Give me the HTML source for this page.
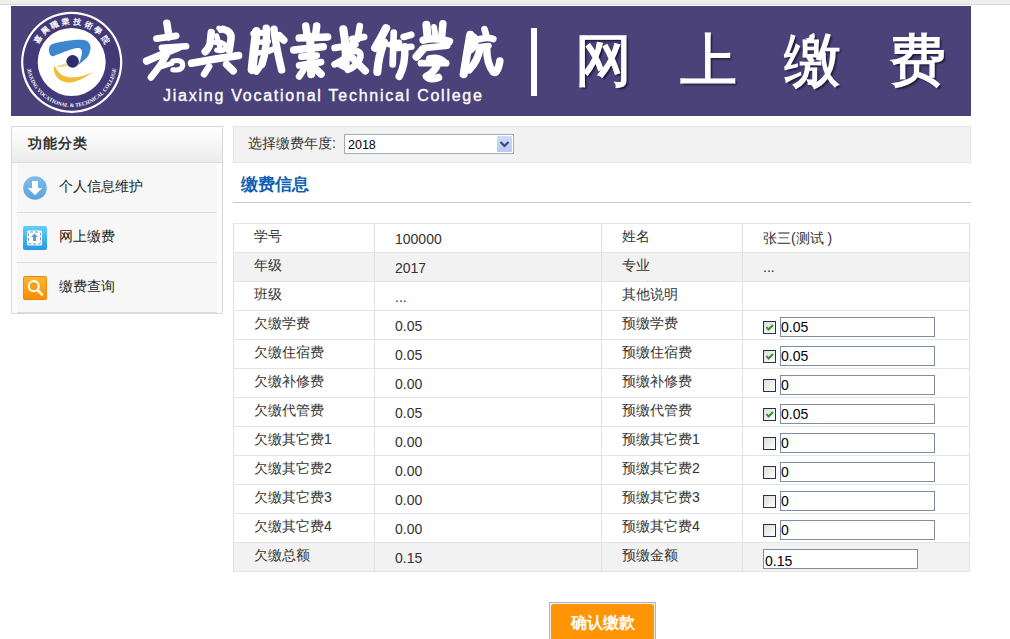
<!DOCTYPE html>
<html><head><meta charset="utf-8">
<style>
*{box-sizing:border-box}
html,body{margin:0;padding:0;background:#fff;width:1010px;height:639px;overflow:hidden;font-family:"Liberation Sans",sans-serif;color:#333}
#topbar{position:absolute;left:0;top:0;width:1010px;height:5px;background:#eeeeea;border-bottom:1px solid #d9d7e0}
#banner{position:absolute;left:11px;top:6px;width:960px;height:110px;background:#4b427a;overflow:hidden}
#cal{position:absolute;left:132px;top:5px;font-size:46px;line-height:60px;font-weight:normal;color:#fff;letter-spacing:-1px;white-space:nowrap;-webkit-text-stroke:1.2px #fff;transform:scaleY(1.25);transform-origin:0 0}
#eng{position:absolute;left:152px;top:80px;font-size:16px;line-height:20px;color:#fff;letter-spacing:1.75px;white-space:nowrap;-webkit-text-stroke:0.35px #fff}
#vbar{position:absolute;left:520px;top:22px;width:6px;height:68px;background:#fff}
#wsjf{position:absolute;left:564px;top:20px;font-size:57px;line-height:68px;color:#fff;letter-spacing:47.7px;white-space:nowrap;-webkit-text-stroke:1.3px #fff;text-shadow:2px 2px 2px #1e1838}
#side{position:absolute;left:11px;top:126px;width:212px;height:188px;border:1px solid #d9d9d9;background:#fcfcfc}
#side .hd{height:36px;background:linear-gradient(#ffffff,#ececec);border-bottom:1px solid #dadada;font-weight:bold;font-size:14px;color:#333;padding-left:16px;line-height:32px;letter-spacing:1px}
#side .it{position:absolute;left:5px;width:200px;height:50px;border-bottom:1px solid #dcdcdc;background:#f7f7f7}
#side .it span{position:absolute;left:42px;top:15px;font-size:14px;color:#222;line-height:16px}
#side .ic{position:absolute;left:6px;top:13px;width:24px;height:24px}
#selbar{position:absolute;left:233px;top:126px;width:738px;height:37px;background:#f2f2f2;border:1px solid #e4e4e4}
#selbar .lb{position:absolute;left:14px;top:8px;font-size:14px;line-height:16px;color:#333}
#sel{position:absolute;left:110px;top:7px;width:170px;height:20px;border:1px solid #a5acb2;background:#fff}
#sel .v{position:absolute;left:3px;top:3px;font-size:12.5px;line-height:14px;color:#000}
#sel .btn{position:absolute;left:152px;top:1px;width:15px;height:16px;background:linear-gradient(#cddbfc,#b7cbf6);border-radius:1px}
#title{position:absolute;left:241px;top:176px;font-size:17px;font-weight:bold;color:#0f5fb5;line-height:18px}
#tline{position:absolute;left:233px;top:202px;width:738px;height:1px;background:#c8c8c8}
table{position:absolute;left:233px;top:223px;border-collapse:collapse;width:736px;table-layout:fixed}
td{border:1px solid #e3e3e3;height:29px;padding:0 0 0 20px;font-size:14px;color:#333;vertical-align:middle;white-space:nowrap}
tr.g td{background:#f2f2f2}
td:nth-child(odd){padding-bottom:2px}
td:nth-child(2){padding-top:2px}
.cb{display:inline-block;vertical-align:middle;position:relative;top:2.5px;width:13px;height:13px;border:1px solid #22344f;background:linear-gradient(135deg,#dcdcd7,#fff)}
.inp{display:inline-block;vertical-align:middle;position:relative;top:2px;width:155px;height:20px;border:1px solid #7d8fa4;background:#fff;margin-left:4px;font-size:14px;line-height:18px;padding-left:0;color:#000}
#btn{position:absolute;left:549px;top:602px;width:107px;height:40px;background:#f4f0e8;border:1px solid #aab6c6;color:#fff;font-weight:bold;font-size:16px;text-align:center;line-height:38px}
#btn div{position:absolute;left:1px;top:1px;right:1px;bottom:0;background:#ff9405;border-radius:3px}
</style></head><body>
<div id="topbar"></div>
<div id="banner">
<svg width="960" height="110" style="position:absolute;left:0;top:0">

<circle cx="60.7" cy="56.3" r="50.6" fill="#fff"/>
<circle cx="60.7" cy="56.3" r="48.4" fill="#433878"/>
<circle cx="60.7" cy="56" r="34" fill="#fff"/>
<g font-family="Liberation Serif"><text transform="translate(28.87 34.88) rotate(-56.43)" text-anchor="middle" font-size="8" font-weight="bold" fill="#fff">嘉</text><text transform="translate(35.99 26.87) rotate(-40.31)" text-anchor="middle" font-size="8" font-weight="bold" fill="#fff">興</text><text transform="translate(45.05 21.15) rotate(-24.19)" text-anchor="middle" font-size="8" font-weight="bold" fill="#fff">職</text><text transform="translate(55.34 18.18) rotate(-8.06)" text-anchor="middle" font-size="8" font-weight="bold" fill="#fff">業</text><text transform="translate(66.06 18.18) rotate(8.06)" text-anchor="middle" font-size="8" font-weight="bold" fill="#fff">技</text><text transform="translate(76.35 21.15) rotate(24.19)" text-anchor="middle" font-size="8" font-weight="bold" fill="#fff">術</text><text transform="translate(85.41 26.87) rotate(40.31)" text-anchor="middle" font-size="8" font-weight="bold" fill="#fff">學</text><text transform="translate(92.53 34.88) rotate(56.43)" text-anchor="middle" font-size="8" font-weight="bold" fill="#fff">院</text><text transform="translate(16.41 63.98) rotate(79.79)" text-anchor="middle" font-size="5.4" font-weight="bold" fill="#fff">J</text><text transform="translate(16.89 66.29) rotate(76.78)" text-anchor="middle" font-size="5.4" font-weight="bold" fill="#fff">I</text><text transform="translate(17.67 69.16) rotate(73.00)" text-anchor="middle" font-size="5.4" font-weight="bold" fill="#fff">A</text><text transform="translate(18.95 72.80) rotate(68.08)" text-anchor="middle" font-size="5.4" font-weight="bold" fill="#fff">X</text><text transform="translate(20.15 75.51) rotate(64.30)" text-anchor="middle" font-size="5.4" font-weight="bold" fill="#fff">I</text><text transform="translate(21.52 78.14) rotate(60.53)" text-anchor="middle" font-size="5.4" font-weight="bold" fill="#fff">N</text><text transform="translate(23.65 81.54) rotate(55.42)" text-anchor="middle" font-size="5.4" font-weight="bold" fill="#fff">G</text><text transform="translate(26.93 85.74) rotate(48.63)" text-anchor="middle" font-size="5.4" font-weight="bold" fill="#fff">V</text><text transform="translate(29.72 88.63) rotate(43.52)" text-anchor="middle" font-size="5.4" font-weight="bold" fill="#fff">O</text><text transform="translate(32.75 91.26) rotate(38.40)" text-anchor="middle" font-size="5.4" font-weight="bold" fill="#fff">C</text><text transform="translate(35.87 93.53) rotate(33.48)" text-anchor="middle" font-size="5.4" font-weight="bold" fill="#fff">A</text><text transform="translate(39.05 95.45) rotate(28.75)" text-anchor="middle" font-size="5.4" font-weight="bold" fill="#fff">T</text><text transform="translate(41.57 96.73) rotate(25.16)" text-anchor="middle" font-size="5.4" font-weight="bold" fill="#fff">I</text><text transform="translate(44.43 97.96) rotate(21.20)" text-anchor="middle" font-size="5.4" font-weight="bold" fill="#fff">O</text><text transform="translate(48.23 99.24) rotate(16.08)" text-anchor="middle" font-size="5.4" font-weight="bold" fill="#fff">N</text><text transform="translate(51.99 100.15) rotate(11.16)" text-anchor="middle" font-size="5.4" font-weight="bold" fill="#fff">A</text><text transform="translate(55.66 100.72) rotate(6.43)" text-anchor="middle" font-size="5.4" font-weight="bold" fill="#fff">L</text><text transform="translate(60.98 101.00) rotate(-0.36)" text-anchor="middle" font-size="5.4" font-weight="bold" fill="#fff">&amp;</text><text transform="translate(66.30 100.65) rotate(-7.14)" text-anchor="middle" font-size="5.4" font-weight="bold" fill="#fff">T</text><text transform="translate(69.81 100.07) rotate(-11.68)" text-anchor="middle" font-size="5.4" font-weight="bold" fill="#fff">E</text><text transform="translate(73.42 99.17) rotate(-16.42)" text-anchor="middle" font-size="5.4" font-weight="bold" fill="#fff">C</text><text transform="translate(77.21 97.86) rotate(-21.53)" text-anchor="middle" font-size="5.4" font-weight="bold" fill="#fff">H</text><text transform="translate(80.88 96.22) rotate(-26.64)" text-anchor="middle" font-size="5.4" font-weight="bold" fill="#fff">N</text><text transform="translate(83.48 94.81) rotate(-30.42)" text-anchor="middle" font-size="5.4" font-weight="bold" fill="#fff">I</text><text transform="translate(85.99 93.22) rotate(-34.19)" text-anchor="middle" font-size="5.4" font-weight="bold" fill="#fff">C</text><text transform="translate(89.09 90.91) rotate(-39.11)" text-anchor="middle" font-size="5.4" font-weight="bold" fill="#fff">A</text><text transform="translate(91.87 88.45) rotate(-43.85)" text-anchor="middle" font-size="5.4" font-weight="bold" fill="#fff">L</text><text transform="translate(95.30 84.77) rotate(-50.25)" text-anchor="middle" font-size="5.4" font-weight="bold" fill="#fff">C</text><text transform="translate(97.73 81.58) rotate(-55.36)" text-anchor="middle" font-size="5.4" font-weight="bold" fill="#fff">O</text><text transform="translate(99.78 78.30) rotate(-60.29)" text-anchor="middle" font-size="5.4" font-weight="bold" fill="#fff">L</text><text transform="translate(101.43 75.14) rotate(-64.83)" text-anchor="middle" font-size="5.4" font-weight="bold" fill="#fff">L</text><text transform="translate(102.81 71.85) rotate(-69.37)" text-anchor="middle" font-size="5.4" font-weight="bold" fill="#fff">E</text><text transform="translate(104.02 68.18) rotate(-74.29)" text-anchor="middle" font-size="5.4" font-weight="bold" fill="#fff">G</text><text transform="translate(104.91 64.42) rotate(-79.22)" text-anchor="middle" font-size="5.4" font-weight="bold" fill="#fff">E</text></g>
<path d="M 38 44 C 38 40, 40 38, 43 37.5 C 52 35, 66 33, 73 34 C 78 35, 80 39, 79.5 43 C 79 47, 77 51, 74.5 53 L 67.4 59 C 69 55, 70.5 51, 71 47 C 71.5 43.5, 69 41.5, 66 42 C 60 43, 50 47, 43 50 C 40 51, 38 48, 38 44 Z" fill="#3c87cf"/>
<circle cx="61.6" cy="55.4" r="6.3" fill="#2e2d6c"/>
<path d="M 43.4 59.5 C 41 66, 46 75, 55.7 76.5 C 63 77.5, 74 72, 82.7 65.4 C 76 69, 66 72, 58 71.2 C 52 70.5, 48 67, 46 64 Z" fill="#f1bb3c"/><path d="M 56 57 C 52 58, 48 59, 45 61 C 49 61, 53 61, 57 60 Z" fill="#f5d890"/>
</svg>

<div id="eng">Jiaxing Vocational Technical College</div>
<div id="vbar"></div>
<div id="wsjf">网上缴费</div>
</div>
<div id="side">
  <div class="hd">功能分类</div>
  <div class="it" style="top:36px"><svg class="ic" width="24" height="24" viewBox="0 0 24 24"><defs><linearGradient id="g1" x1="0" y1="0" x2="0" y2="1"><stop offset="0" stop-color="#7dbcec"/><stop offset="1" stop-color="#5ea3de"/></linearGradient></defs><circle cx="12" cy="12" r="11.8" fill="url(#g1)"/><path d="M9 5 H15 V12 H19.2 L12 19.2 L4.8 12 H9 Z" fill="#fff"/></svg><span>个人信息维护</span></div>
  <div class="it" style="top:86px"><svg class="ic" width="24" height="24" viewBox="0 0 24 24"><defs><linearGradient id="g2" x1="0" y1="0" x2="0" y2="1"><stop offset="0" stop-color="#5fd0f8"/><stop offset="1" stop-color="#279ae0"/></linearGradient></defs><rect x="0" y="0" width="24" height="24" rx="2" fill="url(#g2)"/><rect x="4" y="4.5" width="15" height="15" rx="1.5" fill="#fff"/><rect x="5.5" y="6" width="12" height="12" rx="1.5" fill="none" stroke="#7a8fb8" stroke-width="1" stroke-dasharray="3 2"/><path d="M11.5 7.5 L15 11 H13 V15 H10 V11 H8 Z" fill="#5a9ad8"/></svg><span>网上缴费</span></div>
  <div class="it" style="top:136px"><svg class="ic" width="24" height="24" viewBox="0 0 24 24"><defs><linearGradient id="g3" x1="0" y1="0" x2="0" y2="1"><stop offset="0" stop-color="#ffb733"/><stop offset="1" stop-color="#ff8a00"/></linearGradient></defs><rect x="0" y="0" width="24" height="24" rx="2" fill="url(#g3)"/><rect x="0.5" y="0.5" width="23" height="23" rx="2" fill="none" stroke="#e08a10" stroke-width="1"/><circle cx="10.8" cy="10.2" r="5" fill="#f0a020" stroke="#fffbe8" stroke-width="2.2"/><path d="M14.5 14 L19 18.6" stroke="#fffbe8" stroke-width="2.6" stroke-linecap="round"/></svg><span>缴费查询</span></div>
</div>
<div id="selbar"><div class="lb">选择缴费年度:</div><div id="sel"><div class="v">2018</div><div class="btn"><svg width="15" height="16" style="position:absolute;left:0;top:0"><path d="M3.5 6 L7.5 10 L11.5 6" stroke="#3b4a6b" stroke-width="2.2" fill="none"/></svg></div></div></div>
<div id="title">缴费信息</div>
<div id="tline"></div>
<table>
<colgroup><col style="width:141px"><col style="width:227px"><col style="width:141px"><col style="width:227px"></colgroup>
<tr><td>学号</td><td>100000</td><td>姓名</td><td><span style="position:relative;top:1px">张三(测试 )</span></td></tr>
<tr class="g"><td>年级</td><td>2017</td><td>专业</td><td>...</td></tr>
<tr><td>班级</td><td>...</td><td>其他说明</td><td></td></tr>
<tr><td>欠缴学费</td><td>0.05</td><td>预缴学费</td><td><span class="cb"><svg width="11" height="11" style="position:absolute;left:0;top:0"><path d="M2.5 5 L4.5 7.5 L9 3" stroke="#2f922f" stroke-width="2" fill="none"/></svg></span><span class="inp">0.05</span></td></tr>
<tr><td>欠缴住宿费</td><td>0.05</td><td>预缴住宿费</td><td><span class="cb"><svg width="11" height="11" style="position:absolute;left:0;top:0"><path d="M2.5 5 L4.5 7.5 L9 3" stroke="#2f922f" stroke-width="2" fill="none"/></svg></span><span class="inp">0.05</span></td></tr>
<tr><td>欠缴补修费</td><td>0.00</td><td>预缴补修费</td><td><span class="cb"></span><span class="inp">0</span></td></tr>
<tr><td>欠缴代管费</td><td>0.05</td><td>预缴代管费</td><td><span class="cb"><svg width="11" height="11" style="position:absolute;left:0;top:0"><path d="M2.5 5 L4.5 7.5 L9 3" stroke="#2f922f" stroke-width="2" fill="none"/></svg></span><span class="inp">0.05</span></td></tr>
<tr><td>欠缴其它费1</td><td>0.00</td><td>预缴其它费1</td><td><span class="cb"></span><span class="inp">0</span></td></tr>
<tr><td>欠缴其它费2</td><td>0.00</td><td>预缴其它费2</td><td><span class="cb"></span><span class="inp">0</span></td></tr>
<tr><td>欠缴其它费3</td><td>0.00</td><td>预缴其它费3</td><td><span class="cb"></span><span class="inp">0</span></td></tr>
<tr><td>欠缴其它费4</td><td>0.00</td><td>预缴其它费4</td><td><span class="cb"></span><span class="inp">0</span></td></tr>
<tr class="g"><td>欠缴总额</td><td>0.15</td><td>预缴金额</td><td><span class="inp" style="margin-left:0;line-height:22px;padding-left:1px">0.15</span></td></tr>
</table>
<svg id="calsvg" width="1010" height="120" style="position:absolute;left:0;top:0" fill="none" stroke="#fff" stroke-linecap="round" stroke-linejoin="round">
<g transform="translate(140,15) scale(0.1096)">
<path stroke-width="68" d="M 245 75 L 265 200"/>
<path stroke-width="61" d="M 150 215 L 330 190"/>
<path stroke-width="61" d="M 200 300 L 420 285"/>
<path stroke-width="68" d="M 345 300 Q 220 350 60 420"/>
<path stroke-width="61" d="M 245 360 Q 190 460 100 570"/>
<path stroke-width="47" d="M 300 420 Q 390 400 390 460 Q 380 510 300 500"/>
<path stroke-width="47" d="M 170 480 L 290 440"/>
<path stroke-width="68" d="M 650 160 L 640 260 Q 625 310 595 335"/>
<path stroke-width="68" d="M 760 130 Q 840 150 830 220 L 815 320"/>
<path stroke-width="47" d="M 700 190 L 730 300"/>
<path stroke-width="47" d="M 690 250 Q 760 240 790 290 Q 760 340 700 320"/>
<path stroke-width="68" d="M 470 440 Q 680 400 900 370"/>
<path stroke-width="61" d="M 630 470 L 585 540"/>
<path stroke-width="68" d="M 790 450 L 850 510"/>
<path stroke-width="47" d="M 720 120 L 735 140"/>
</g>
<g transform="translate(240,15) scale(0.10958)">
<path stroke-width="81" d="M 150 150 Q 130 300 110 500"/>
<path stroke-width="54" d="M 120 170 L 240 160"/>
<path stroke-width="47" d="M 170 250 L 260 240"/>
<path stroke-width="47" d="M 150 350 L 250 330"/>
<path stroke-width="68" d="M 240 120 Q 250 300 200 450"/>
<path stroke-width="68" d="M 310 130 Q 330 300 380 500"/>
<path stroke-width="68" d="M 360 190 L 400 230"/>
<path stroke-width="54" d="M 260 330 L 330 300"/>
<path stroke-width="54" d="M 200 450 L 150 520"/>
<path stroke-width="68" d="M 600 100 L 610 170"/>
<path stroke-width="68" d="M 700 100 L 690 180"/>
<path stroke-width="68" d="M 540 210 L 800 200"/>
<path stroke-width="68" d="M 490 320 L 760 290"/>
<path stroke-width="74" d="M 640 200 L 650 540"/>
<path stroke-width="61" d="M 560 380 L 700 370"/>
<path stroke-width="61" d="M 540 460 L 740 430"/>
<path stroke-width="61" d="M 600 470 L 540 560"/>
<path stroke-width="68" d="M 680 480 L 740 540"/>
</g>
<g transform="translate(328,15) scale(0.10958)">
<path stroke-width="74" d="M 140 130 Q 170 300 160 470 L 100 440"/>
<path stroke-width="61" d="M 60 300 L 250 270"/>
<path stroke-width="61" d="M 60 450 L 200 370"/>
<path stroke-width="61" d="M 290 100 L 270 220"/>
<path stroke-width="61" d="M 220 220 L 330 200"/>
<path stroke-width="61" d="M 220 330 Q 320 320 290 400 Q 260 470 180 500"/>
<path stroke-width="68" d="M 220 390 L 340 510"/>
<path stroke-width="74" d="M 530 120 Q 480 220 430 300"/>
<path stroke-width="74" d="M 510 250 Q 460 380 450 520"/>
<path stroke-width="61" d="M 600 160 L 590 450"/>
<path stroke-width="54" d="M 560 270 L 650 250"/>
<path stroke-width="61" d="M 690 200 L 760 180"/>
<path stroke-width="61" d="M 640 300 L 760 290"/>
<path stroke-width="68" d="M 700 290 Q 710 450 650 560"/>
</g>
<g transform="translate(410,15) scale(0.10958)">
<path stroke-width="74" d="M 150 90 L 160 200"/>
<path stroke-width="68" d="M 300 80 L 290 190"/>
<path stroke-width="54" d="M 220 110 L 230 180"/>
<path stroke-width="68" d="M 120 230 Q 230 200 360 240"/>
<path stroke-width="74" d="M 60 380 L 120 310"/>
<path stroke-width="61" d="M 140 300 L 340 280"/>
<path stroke-width="68" d="M 180 400 Q 260 380 310 430"/>
<path stroke-width="68" d="M 260 430 Q 230 520 150 560 Q 180 600 260 570"/>
<path stroke-width="61" d="M 100 440 L 330 440"/>
<path stroke-width="61" d="M 540 200 Q 600 180 600 240 Q 590 300 540 330"/>
<path stroke-width="74" d="M 550 180 Q 520 350 490 540"/>
<path stroke-width="61" d="M 680 130 L 700 200"/>
<path stroke-width="61" d="M 640 220 Q 720 200 760 220"/>
<path stroke-width="54" d="M 640 290 L 720 280"/>
<path stroke-width="68" d="M 640 300 Q 620 420 540 500"/>
<path stroke-width="68" d="M 700 300 Q 700 450 760 520 Q 800 540 820 420"/>
</g>
</svg>
<div id="btn"><div>确认缴款</div></div>
</body></html>
